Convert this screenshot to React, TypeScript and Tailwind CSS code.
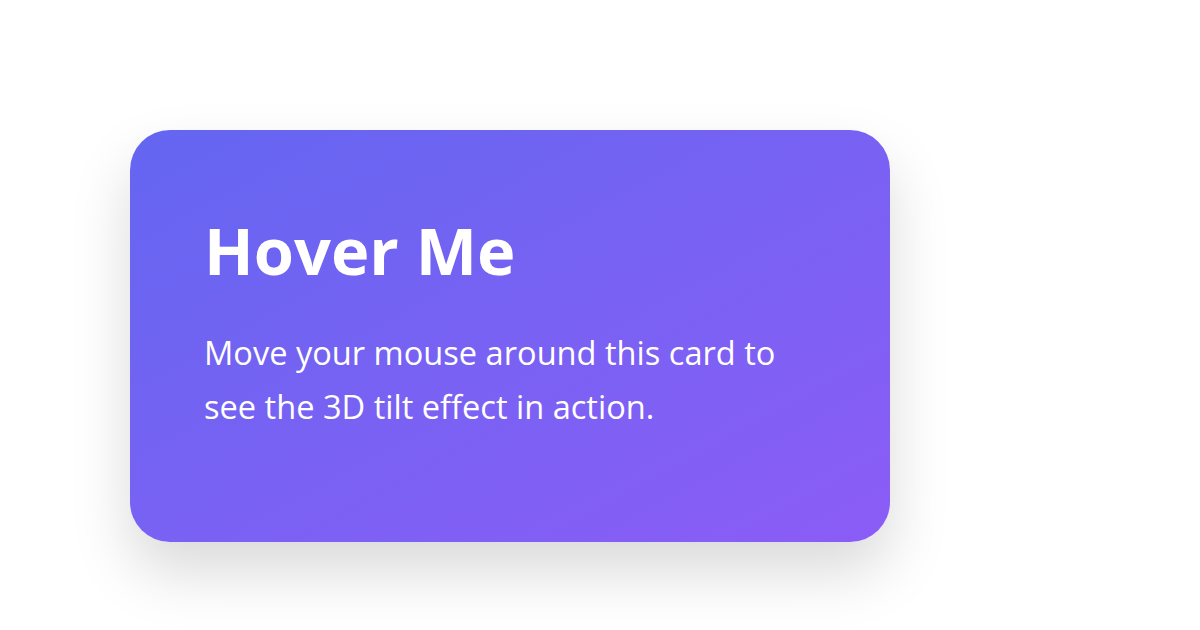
export default function App() {
  return (
    <div className="min-h-[630px] w-[1200px] bg-white pl-[130px] pt-[130px] font-['Open_Sans',sans-serif]">
      <div className="h-[412px] w-[760px] rounded-[40px] bg-gradient-to-br from-[#6366f1] to-[#8b5cf6] px-[74px] pt-[81px] text-white shadow-[0_30px_60px_rgba(0,0,0,0.15)]">
        <h1 className="text-[65px] font-bold leading-[1.2]">Hover Me</h1>
        <p className="mt-[37px] text-[32.6px] leading-[54px]">
          Move your mouse around this card to
          <br />
          see the 3D tilt effect in action.
        </p>
      </div>
    </div>
  );
}
